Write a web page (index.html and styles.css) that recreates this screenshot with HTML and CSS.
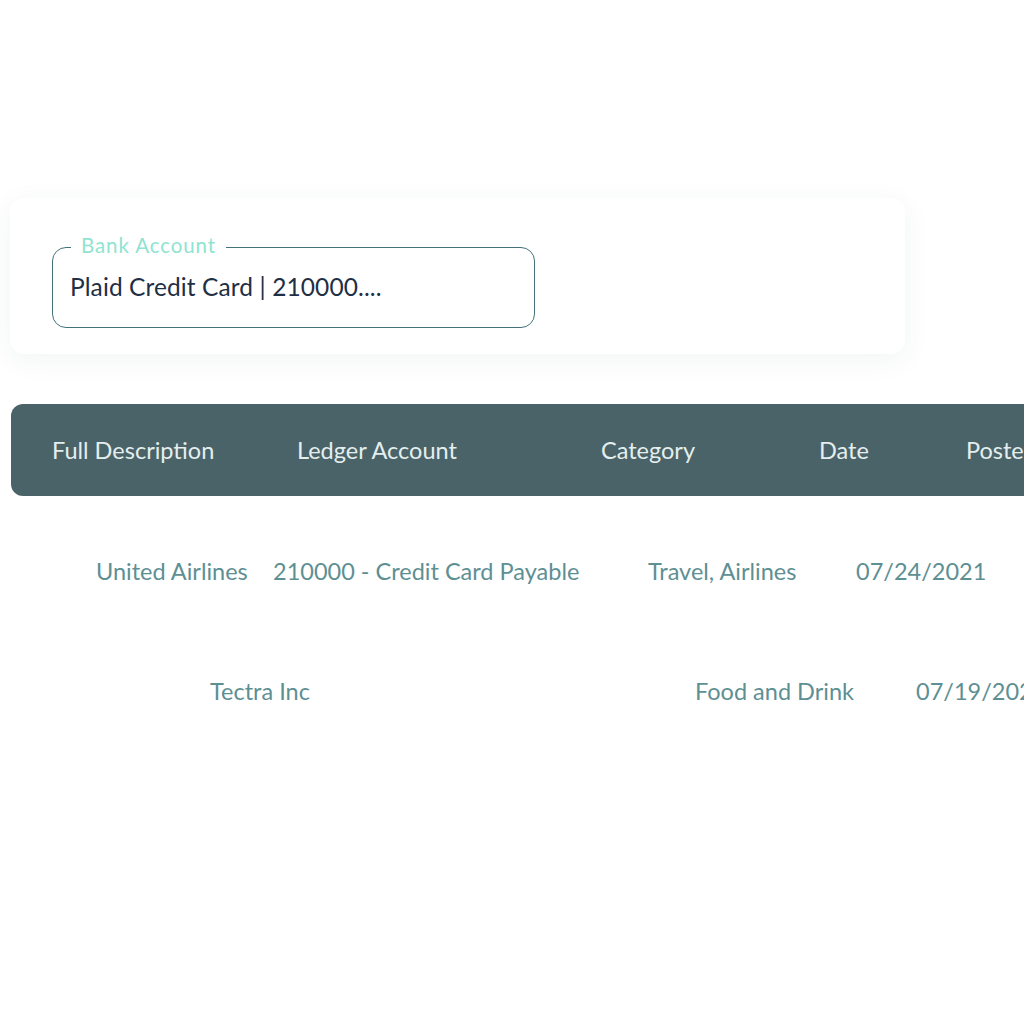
FILE: index.html
```html
<!DOCTYPE html>
<html lang="en">
<head>
<meta charset="utf-8">
<title>Bank Transactions</title>
<link rel="stylesheet" href="styles.css">
</head>
<body>
<main class="page">
  <section class="card">
    <fieldset class="field">
      <legend class="field-label">Bank Account</legend>
      <div class="field-value">Plaid Credit Card | 210000....</div>
    </fieldset>
  </section>

  <section class="table">
    <div class="thead">
      <div>Full Description</div>
      <div>Ledger Account</div>
      <div>Category</div>
      <div>Date</div>
      <div>Posted</div>
    </div>
    <div class="row row-1">
      <div>United Airlines</div>
      <div>210000 - Credit Card Payable</div>
      <div>Travel, Airlines</div>
      <div>07/24/2021</div>
    </div>
    <div class="row row-2">
      <div>Tectra Inc</div>
      <div></div>
      <div>Food and Drink</div>
      <div>07/19/2021</div>
    </div>
  </section>
</main>
</body>
</html>
```

FILE: styles.css
```css
html, body {
  margin: 0;
  padding: 0;
  background: #ffffff;
  overflow: hidden;
}

body {
  font-family: "Lato", "Noto Sans", sans-serif;
  width: 1024px;
  height: 1021px;
}

.page {
  padding-top: 198px;
  width: 1300px;
}

.card {
  margin-left: 10px;
  width: 895px;
  height: 156px;
  box-sizing: border-box;
  padding: 36px 0 0 42px;
  background: #ffffff;
  border-radius: 14px;
  box-shadow: 0 6px 28px rgba(40, 60, 70, 0.06);
}

.field {
  margin: 0;
  width: 483px;
  height: 94px;
  box-sizing: border-box;
  border: 1.5px solid #44727a;
  border-radius: 14px;
  padding: 0 16px 0 17px;
}

.field-label {
  padding: 0 10px;
  margin-left: 1px;
  font-size: 20.5px;
  line-height: 26px;
  color: #8fe4d0;
  font-weight: 400;
  letter-spacing: 0.9px;
  position: relative;
  top: -2px;
}

.field-value {
  padding-top: 12px;
  font-size: 24.5px;
  line-height: 30px;
  color: #1f2f45;
  letter-spacing: 0.1px;
}

.table {
  margin-top: 50px;
  margin-left: 11px;
}

.thead {
  display: grid;
  grid-template-columns: 245px 304px 218px 147px 200px;
  align-items: center;
  height: 92px;
  padding-left: 41px;
  background: #4a6368;
  border-radius: 12px 0 0 12px;
  color: #e4eeee;
  font-size: 23.5px;
  white-space: nowrap;
}

.row {
  display: grid;
  align-items: center;
  height: 120px;
  color: #5e8f93;
  font-size: 23.5px;
  white-space: nowrap;
}

.row-1 {
  margin-top: 15px;
  padding-left: 85px;
  grid-template-columns: 177px 375px 208px auto;
}

.row-2 {
  padding-left: 199px;
  grid-template-columns: 240px 245px 221px auto;
}
```
